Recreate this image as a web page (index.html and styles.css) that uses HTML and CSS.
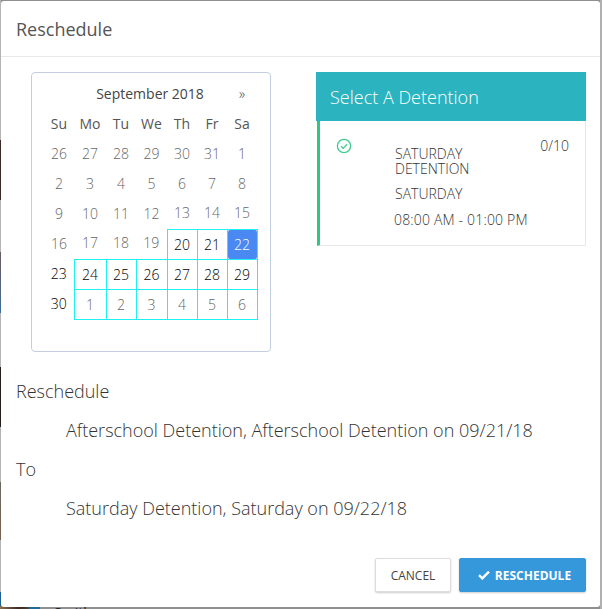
FILE: index.html
```html
<!DOCTYPE html>
<html lang="en">
<head>
<meta charset="utf-8">
<title>Reschedule</title>
<link rel="stylesheet" href="styles.css">
</head>
<body>
<div class="backdrop">
  <span class="backdrop-photo"></span>
  <span class="backdrop-text">Smith</span>
</div>
<div class="modal">
  <header class="modal-header">Reschedule</header>
  <div class="modal-body">
    <div class="pickers">
      <div class="calendar">
        <table class="cal-table">
          <colgroup><col class="c30"><col class="c32"><col class="c30"><col class="c31"><col class="c30"><col class="c30"><col class="c30"></colgroup>
          <tr class="month-row"><th colspan="6" class="month">September 2018</th><th class="next">»</th></tr>
          <tr class="dow"><th>Su</th><th>Mo</th><th>Tu</th><th>We</th><th>Th</th><th>Fr</th><th>Sa</th></tr>
          <tr><td class="dim">26</td><td class="dim">27</td><td class="dim">28</td><td class="dim">29</td><td class="dim">30</td><td class="dim">31</td><td class="dim">1</td></tr>
          <tr><td class="dim">2</td><td class="dim">3</td><td class="dim">4</td><td class="dim">5</td><td class="dim">6</td><td class="dim">7</td><td class="dim">8</td></tr>
          <tr><td class="dim">9</td><td class="dim">10</td><td class="dim">11</td><td class="dim">12</td><td class="dim">13</td><td class="dim">14</td><td class="dim">15</td></tr>
          <tr><td class="dim">16</td><td class="dim">17</td><td class="dim">18</td><td class="dim">19</td><td class="on">20</td><td class="on">21</td><td class="on sel"><span class="sel-fill">22</span></td></tr>
          <tr><td class="plain">23</td><td class="on">24</td><td class="on">25</td><td class="on">26</td><td class="on">27</td><td class="on">28</td><td class="on">29</td></tr>
          <tr><td class="plain">30</td><td class="on muted">1</td><td class="on muted">2</td><td class="on muted">3</td><td class="on muted">4</td><td class="on muted">5</td><td class="on muted">6</td></tr>
        </table>
      </div>
      <section class="panel">
        <h2 class="panel-title">Select A Detention</h2>
        <div class="panel-item">
          <svg class="check-circle" width="16" height="16" viewBox="0 0 16 16" aria-hidden="true"><circle cx="8" cy="8" r="6.6" fill="none" stroke="#3fcb90" stroke-width="1.3"/><path d="M5 8.2l2.2 2.2L11 6.3" fill="none" stroke="#3fcb90" stroke-width="1.3"/></svg>
          <div class="item-text">
            <div class="item-name">SATURDAY<br>DETENTION</div>
            <div class="item-day">SATURDAY</div>
            <div class="item-time">08:00 AM - 01:00 PM</div>
          </div>
          <div class="item-count">0/10</div>
        </div>
      </section>
    </div>
    <div class="summary">
      <p class="sum-label">Reschedule</p>
      <p class="sum-value">Afterschool Detention, Afterschool Detention on 09/21/18</p>
      <p class="sum-label">To</p>
      <p class="sum-value">Saturday Detention, Saturday on 09/22/18</p>
    </div>
  </div>
  <footer class="modal-footer">
    <button class="btn btn-cancel" type="button">CANCEL</button>
    <button class="btn btn-primary" type="button"><svg class="btn-check" width="12" height="10" viewBox="0 0 12 10" aria-hidden="true"><path d="M1 5.2l3.3 3.2L11 1.6" fill="none" stroke="#fff" stroke-width="2.4"/></svg>RESCHEDULE</button>
  </footer>
</div>
</body>
</html>
```
FILE: styles.css
```css
* { box-sizing: border-box; }
html, body { margin: 0; height: 609px; overflow: hidden; }
body {
  position: relative;
  background: #8f8f8f;
  font-family: "Open Sans", "Liberation Sans", sans-serif;
  font-weight: 300;
  color: #333;
}
.backdrop { position: absolute; inset: 0; overflow: hidden; }
.backdrop::before {
  content: "";
  position: absolute;
  left: 0; top: 0; bottom: 0; width: 1px;
  background: linear-gradient(to bottom,
    #b4b4b4 0, #b4b4b4 140px, #3a2a25 140px, #3a2a25 200px,
    #b4b4b4 200px, #b4b4b4 252px, #6a5a60 252px, #3f6d95 313px,
    #b4b4b4 313px, #b4b4b4 367px, #2a1e1c 367px, #2a1e1c 427px,
    #b4b4b4 427px, #b4b4b4 482px, #6a6a60 482px, #7a6050 540px,
    #b4b4b4 540px, #b4b4b4 592px, #1e5f8f 592px);
}
.backdrop::after {
  content: "";
  position: absolute;
  right: 0; top: 0; bottom: 0; width: 2px;
  background: #b0b0b0;
}
.backdrop-photo {
  position: absolute;
  left: 0; bottom: 0; width: 40px; height: 3px;
  background: linear-gradient(to right, #8a7050, #3a2c24 45%, #4a3a30 68%, #1e6a9a 75%);
}
.backdrop-text {
  position: absolute;
  left: 54px; top: 603px;
  font-size: 14px;
  font-weight: 400;
  color: #222;
}
.modal {
  position: absolute;
  left: 1px; top: 1px;
  width: 599px; height: 606px;
  background: #fff;
  border-radius: 3px;
  display: flex;
  flex-direction: column;
}
.modal-header {
  height: 56px;
  flex: none;
  padding: 0 15px;
  display: flex;
  align-items: center;
  font-size: 18px;
  font-weight: 400;
  color: #555;
  border-bottom: 1px solid #e8e8e8;
}
.modal-body { flex: 1; padding: 15px 15px 0; }
.pickers { display: flex; align-items: flex-start; padding-left: 15px; }
.calendar {
  width: 240px;
  height: 280px;
  flex: none;
  border: 1px solid #c3cfe0;
  border-radius: 4px;
  padding: 6px 0 0 12px;
}
.cal-table {
  table-layout: fixed;
  width: 213px;
  border-collapse: collapse;
  font-size: 14px;
  text-align: center;
}
.c30 { width: 30px; }
.c31 { width: 31px; }
.c32 { width: 32px; }
.cal-table tr { height: 30px; }
.cal-table th, .cal-table td { padding: 0 0 2px; font-weight: 300; }
.month-row th { font-weight: 400; font-size: 14px; color: #444; }
.month { padding-left: 29px !important; }
.next { font-size: 14px; color: #444; font-weight: 300 !important; }
.dow th { font-weight: 400; color: #555; }
.dim { color: #666; }
.plain { color: #000; }
.on { border: 1px solid #1ff0f0; color: #000; padding-bottom: 0 !important; }
.on.muted { color: #666; }
.sel { padding: 0 !important; }
.sel-fill {
  display: flex;
  align-items: center;
  justify-content: center;
  height: 29px;
  background: #4a88f2;
  color: #fff;
  border-radius: 2px;
}
.panel { width: 270px; margin-left: 45px; flex: none; }
.panel-title {
  margin: 0;
  height: 49px;
  padding: 0 14px;
  display: flex;
  align-items: center;
  background: #2bb3bf;
  color: #fff;
  font-size: 18px;
  font-weight: 300;
}
.panel-item {
  height: 125px;
  margin-left: 1px;
  display: flex;
  align-items: flex-start;
  border-left: 3px solid #2fc683;
  border-right: 1px solid #e8e8e8;
  border-bottom: 1px solid #e8e8e8;
  padding: 17px 16px 0 16px;
  font-size: 14px;
}
.check-circle { flex: none; margin-right: 43px; }
.item-text { flex: 1; padding-top: 8px; color: #333; }
.item-name { line-height: 15px; }
.item-day { line-height: 15px; margin-top: 10px; }
.item-time { color: #333; line-height: 20px; margin: 9px 0 0 -1px; letter-spacing: .17px; }
.item-count { line-height: 16px; }
.summary { margin-top: 27px; }
.sum-label, .sum-value { margin: 0; font-size: 18px; line-height: 24px; color: #333; }
.sum-label { padding-top: 15px; }
.sum-value { padding: 15px 0 0 50px; }
.summary .sum-label:first-child { padding-top: 0; }
.modal-footer {
  flex: none;
  display: flex;
  justify-content: flex-end;
  gap: 8px;
  padding: 0 14px 15px;
}
.btn {
  height: 34px;
  border-radius: 2px;
  font-family: inherit;
  font-size: 12px;
  font-weight: 700;
  padding: 0;
  display: flex;
  align-items: center;
  justify-content: center;
  box-shadow: 0 1px 2px rgba(0,0,0,.2);
}
.btn-cancel { width: 76px; background: #fff; border: 1px solid #ddd; color: #444; font-weight: 400; }
.btn-primary { width: 127px; background: #3498db; border: 1px solid #3498db; color: #fff; padding-left: 4px; }
.btn-check { margin-right: 5px; }
```
